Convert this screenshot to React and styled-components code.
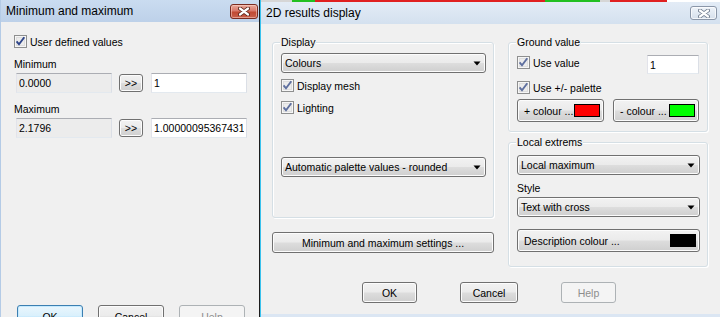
import React from 'react';
import styled, { createGlobalStyle } from 'styled-components';

const GlobalStyle = createGlobalStyle`
  html, body {
    margin: 0;
    padding: 0;
    background: #f0f0f0;
    overflow: hidden;
  }
  body {
    font-family: "Liberation Sans", Arial, sans-serif;
    font-size: 10.5px;
    color: #000;
  }
  * { box-sizing: border-box; }
`;

const Screen = styled.div`
  display: flex;
  width: 720px;
  height: 317px;
  overflow: hidden;
  background: #f0f0f0;
`;

/* ---------- window chrome ---------- */

const LeftWindow = styled.div`
  flex: none;
  width: 259px;
  height: 100%;
  display: flex;
  flex-direction: column;
  border-left: 1px solid #b4cbe6;
  background: #f0f0f0;
`;

const RightWindow = styled.div`
  flex: 1;
  display: flex;
  border-left: 1px solid #1c1c1c;
`;

const RightFrame = styled.div`
  flex: 1;
  display: flex;
  flex-direction: column;
  border-left: 1px solid #3ac2ee;
`;

const TopStrip = styled.div`
  flex: none;
  height: 2px;
  background: linear-gradient(to right,
    #d6d6d6 0, #d6d6d6 31px,
    #22c022 31px, #22c022 54px,
    #e02020 54px, #e02020 284px,
    #22c022 284px, #22c022 339px,
    #d6d6d6 339px, #d6d6d6 349px,
    #e02020 349px, #e02020 406px,
    #ffffff 406px);
`;

const TitleBar = styled.div`
  flex: none;
  height: 22px;
  display: flex;
  align-items: center;
  justify-content: space-between;
  padding: 0 ${p => p.$padRight}px 0 5px;
  background: ${p => p.$active
    ? 'linear-gradient(#cadcf0, #bdd1e9)'
    : 'linear-gradient(#e3ecf6, #d4e1ef)'};
  font-size: 12px;
  line-height: 14px;
`;

const CloseBox = styled.div`
  width: ${p => p.$w}px;
  height: ${p => p.$h}px;
  border-radius: 3px;
  display: flex;
  align-items: center;
  justify-content: center;
  border: 1px solid ${p => p.$active ? '#7a2b20' : '#8a96a8'};
  background: ${p => p.$active
    ? 'linear-gradient(#e9a99b 0%, #d8786a 45%, #c14a33 55%, #c9604c 100%)'
    : 'linear-gradient(#eef3f9, #d6e0ec)'};
  box-shadow: inset 0 0 0 1px ${p => p.$active ? 'rgba(255,220,210,0.5)' : 'rgba(255,255,255,0.7)'};
`;

const CloseButton = ({ active, w, h }) => (
  <CloseBox $active={active} $w={w} $h={h}>
    <svg width="12" height="9" viewBox="0 0 12 9">
      <path d="M2 1.5 L10 7.5 M10 1.5 L2 7.5" stroke={active ? '#5a2218' : '#6f7b8c'} strokeWidth="4" strokeLinecap="round" fill="none" />
      <path d="M2 1.5 L10 7.5 M10 1.5 L2 7.5" stroke="#ffffff" strokeWidth="2.2" strokeLinecap="round" fill="none" />
    </svg>
  </CloseBox>
);

const BottomFrame = styled.div`
  flex: none;
  height: 3px;
  background: #dbe6f3;
`;

/* ---------- controls ---------- */

const Button = styled.div`
  flex: none;
  width: ${p => p.$w ? `${p.$w}px` : 'auto'};
  height: ${p => p.$h || 21}px;
  display: flex;
  align-items: center;
  justify-content: ${p => p.$split ? 'space-between' : 'center'};
  padding: ${p => p.$split ? '0 3px 0 6px' : '0'};
  border-radius: 3px;
  line-height: 12px;
  white-space: nowrap;
  border: 1px solid #707070;
  background: linear-gradient(#f2f2f2 0%, #ebebeb 48%, #dddddd 52%, #cfcfcf 100%);
  box-shadow: inset 0 0 0 1px #fcfcfc;
  color: #000;

  ${p => p.$default && `
    border-color: #3c7fb1;
    background: linear-gradient(#eaf6fd 0%, #d9f0fc 48%, #bee6fd 52%, #a7d9f5 100%);
    box-shadow: inset 0 0 0 1px #c4eaff;
  `}

  ${p => p.$disabled && `
    border-color: #adb2b5;
    background: #f4f4f4;
    box-shadow: none;
    color: #8d8d8d;
  `}
`;

const Swatch = styled.span`
  width: 26px;
  height: 13px;
  border: 1px solid #000;
  background: ${p => p.$color};
`;

const Combo = styled.div`
  height: 20px;
  margin-top: ${p => p.$mt || 0}px;
  display: flex;
  align-items: center;
  justify-content: space-between;
  padding: 0 4px 0 3px;
  border: 1px solid #707070;
  border-radius: 3px;
  background: linear-gradient(#f2f2f2 0%, #ebebeb 48%, #dddddd 52%, #cfcfcf 100%);
  box-shadow: inset 0 0 0 1px #fcfcfc;
  line-height: 12px;
  white-space: nowrap;
`;

const ComboBox = ({ children, mt }) => (
  <Combo $mt={mt}>
    <span>{children}</span>
    <svg width="8" height="5" viewBox="0 0 8 5">
      <polygon points="0.5,0.5 7.5,0.5 4,4.5" fill="#000" />
    </svg>
  </Combo>
);

const CheckRow = styled.div`
  display: flex;
  align-items: center;
  gap: 3px;
  height: 13px;
  margin-top: ${p => p.$mt || 0}px;
  line-height: 12px;
  white-space: nowrap;
`;

const CheckBox = ({ dim }) => (
  <svg width="13" height="13" viewBox="0 0 13 13">
    <rect x="0.5" y="0.5" width="12" height="12" fill="#f6f6f6" stroke="#8e8f8f" />
    <rect x="2" y="2" width="9" height="9" fill="#dedede" />
    <rect x="3" y="3" width="7" height="7" fill="#ececec" />
    <path d="M2.6 6.4 L5 9.3 L10.3 2.2" stroke={dim ? '#5e6f9f' : '#2d4489'} strokeWidth="1.9" fill="none" />
  </svg>
);

const Check = ({ children, mt, dim }) => (
  <CheckRow $mt={mt}>
    <CheckBox dim={dim} />
    <span>{children}</span>
  </CheckRow>
);

const TextField = styled.input`
  flex: none;
  width: ${p => p.$w}px;
  height: ${p => p.$h || 20}px;
  margin: 0;
  padding: 0 2px;
  font: inherit;
  color: #000;
  border: 1px solid #e3e9ef;
  border-top-color: #abadb3;
  border-left-color: #e2e3ea;
  border-right-color: #dbdfe6;
  background: ${p => p.readOnly && p.$grey ? '#ececec' : '#ffffff'};
  outline: none;
`;

const Label = styled.div`
  height: 12px;
  line-height: 12px;
  margin-top: ${p => p.$mt || 0}px;
`;

/* ---------- group boxes ---------- */

const Group = styled.div`
  position: relative;
  height: ${p => p.$h}px;
  margin-top: ${p => p.$mt || 0}px;
  padding: ${p => p.$pt}px 7px 0 8px;
  border: 1px solid #d5dfe5;
  border-radius: 3px;
  box-shadow: inset 1px 1px 0 #fff, 1px 1px 0 #fff;
  display: flex;
  flex-direction: column;
`;

const Legend = styled.span`
  position: absolute;
  top: -7px;
  left: 7px;
  padding: 0 1px;
  line-height: 12px;
  background: #f0f0f0;
`;

/* ---------- left dialog ---------- */

const LeftBody = styled.div`
  display: flex;
  flex-direction: column;
  padding: 13px 0 0 13px;
`;

const ValueRow = styled.div`
  display: flex;
  align-items: center;
  margin: 3px 0 0 2px;
`;

const Arrow = styled(Button)`
  margin: 0 8px 0 7px;
`;

const DialogButtons = styled.div`
  display: flex;
  gap: ${p => p.$gap}px;
  margin: ${p => p.$mt}px 0 0 ${p => p.$ml}px;
`;

/* ---------- right dialog ---------- */

const RightBody = styled.div`
  flex: 1;
  display: flex;
  flex-direction: column;
  padding: 18px 0 0 11px;
`;

const Columns = styled.div`
  display: grid;
  grid-template-columns: 222px 200px;
  column-gap: 14px;
  align-items: start;
`;

const Column = styled.div`
  display: flex;
  flex-direction: column;
`;

const SpreadRow = styled.div`
  display: flex;
  justify-content: space-between;
  align-items: flex-start;
  margin-top: ${p => p.$mt || 0}px;
  padding-right: ${p => p.$pr || 0}px;
`;

export default function App() {
  return (
    <Screen>
      <GlobalStyle />

      <LeftWindow>
        <TitleBar $active $padRight={1}>
          <span>Minimum and maximum</span>
          <CloseButton active w={28} h={15} />
        </TitleBar>
        <LeftBody>
          <Check>User defined values</Check>
          <Label $mt={10}>Minimum</Label>
          <ValueRow>
            <TextField $w={96} $grey readOnly value="0.0000" />
            <Arrow $w={24} $h={18}>&gt;&gt;</Arrow>
            <TextField $w={96} readOnly value="1" />
          </ValueRow>
          <Label $mt={10}>Maximum</Label>
          <ValueRow>
            <TextField $w={96} $grey readOnly value="2.1796" />
            <Arrow $w={24} $h={18}>&gt;&gt;</Arrow>
            <TextField $w={96} readOnly value="1.000000953674316" />
          </ValueRow>
          <DialogButtons $gap={15} $mt={167} $ml={3}>
            <Button $w={66} $h={23} $default>OK</Button>
            <Button $w={66} $h={23}>Cancel</Button>
            <Button $w={66} $h={23} $disabled>Help</Button>
          </DialogButtons>
        </LeftBody>
      </LeftWindow>

      <RightWindow>
        <RightFrame>
          <TopStrip />
          <TitleBar $padRight={3}>
            <span>2D results display</span>
            <CloseButton w={27} h={14} />
          </TitleBar>
          <RightBody>
            <Columns>
              <Column>
                <Group $h={176} $pt={10}>
                  <Legend>Display</Legend>
                  <ComboBox>Colours</ComboBox>
                  <Check mt={6} dim>Display mesh</Check>
                  <Check mt={9} dim>Lighting</Check>
                  <ComboBox mt={43}>Automatic palette values - rounded</ComboBox>
                </Group>
                <Button $h={21} style={{ marginTop: 14 }}>Minimum and maximum settings ...</Button>
              </Column>

              <Column>
                <Group $h={90} $pt={12}>
                  <Legend>Ground value</Legend>
                  <SpreadRow $pr={1}>
                    <Check mt={1} dim>Use value</Check>
                    <TextField $w={52} $h={19} readOnly value="1" />
                  </SpreadRow>
                  <Check mt={7} dim>Use +/- palette</Check>
                  <SpreadRow $mt={5} $pr={1}>
                    <Button $w={87} $h={23} $split>
                      <span>+ colour ...</span>
                      <Swatch $color="#ff0000" />
                    </Button>
                    <Button $w={86} $h={23} $split>
                      <span>- colour ...</span>
                      <Swatch $color="#00ff00" />
                    </Button>
                  </SpreadRow>
                </Group>

                <Group $h={125} $pt={12} $mt={10}>
                  <Legend>Local extrems</Legend>
                  <ComboBox>Local maximum</ComboBox>
                  <Label $mt={7}>Style</Label>
                  <ComboBox mt={3}>Text with cross</ComboBox>
                  <Button $h={23} $split style={{ marginTop: 12 }}>
                    <span>Description colour ...</span>
                    <Swatch $color="#000000" />
                  </Button>
                </Group>
              </Column>
            </Columns>

            <DialogButtons $gap={43} $mt={15} $ml={90}>
              <Button $w={55} $h={21}>OK</Button>
              <Button $w={58} $h={21}>Cancel</Button>
              <Button $w={55} $h={21} $disabled>Help</Button>
            </DialogButtons>
          </RightBody>
          <BottomFrame />
        </RightFrame>
      </RightWindow>
    </Screen>
  );
}
